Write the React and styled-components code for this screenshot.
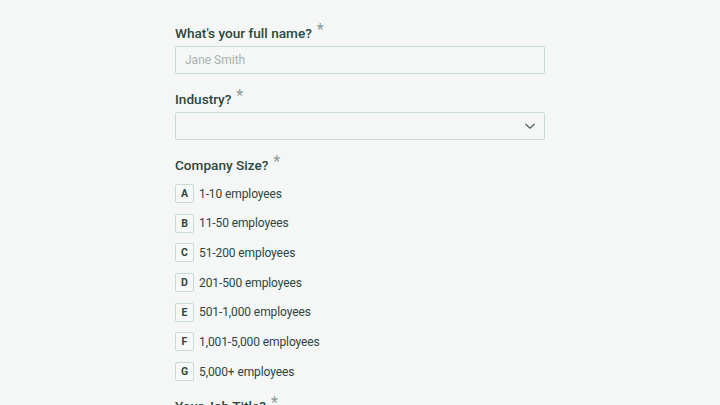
import React from "react";
import styled, { createGlobalStyle } from "styled-components";

const Global = createGlobalStyle`
  html, body {
    margin: 0;
    padding: 0;
    background: #f4f7f6;
  }
  body {
    font-family: Roboto, "Noto Sans", sans-serif;
    color: #2f4a44;
  }
`;

const Page = styled.div`
  display: flex;
  justify-content: center;
  padding-top: 23px;
  height: 382px;
  overflow: hidden;
`;

const Form = styled.form`
  width: 370px;
  display: flex;
  flex-direction: column;
`;

const Field = styled.div`
  display: flex;
  flex-direction: column;
  margin-bottom: 15px;
`;

const Label = styled.label`
  font-size: 13.6px;
  font-weight: 500;
  line-height: 20px;
  height: 20px;
  color: #2c4741;
  margin-bottom: 3px;
`;

const Star = styled.span`
  display: inline-block;
  font-size: 16px;
  font-weight: 400;
  color: #8d9d98;
  margin-left: 5px;
  line-height: 0;
  position: relative;
  top: -3px;
`;

const TextInput = styled.input`
  box-sizing: border-box;
  height: 28px;
  width: 100%;
  border: 1px solid #c8dcd5;
  border-radius: 2px;
  background: #f4f7f6;
  padding: 0 9px;
  font-family: inherit;
  font-size: 12px;
  color: #2f4a44;
  outline: none;
  &::placeholder {
    color: #a5b2ae;
  }
`;

const SelectBox = styled.div`
  box-sizing: border-box;
  height: 28px;
  width: 100%;
  border: 1px solid #c8dcd5;
  border-radius: 2px;
  background: #f4f7f6;
  display: flex;
  align-items: center;
  justify-content: flex-end;
  padding-right: 8px;
`;

const Options = styled.div`
  display: flex;
  flex-direction: column;
  gap: 10.7px;
  margin-top: 6px;
`;

const Option = styled.div`
  display: flex;
  align-items: center;
  height: 19px;
  gap: 5px;
`;

const Key = styled.span`
  box-sizing: border-box;
  width: 19px;
  height: 19px;
  border: 1px solid #c8dcd5;
  border-radius: 2px;
  background: #f7f9f8;
  display: flex;
  align-items: center;
  justify-content: center;
  font-size: 10.5px;
  font-weight: 700;
  color: #2c4741;
`;

const OptionText = styled.span`
  font-size: 12px;
  color: #2e4540;
  letter-spacing: -0.1px;
`;

const sizes = [
  ["A", "1-10 employees"],
  ["B", "11-50 employees"],
  ["C", "51-200 employees"],
  ["D", "201-500 employees"],
  ["E", "501-1,000 employees"],
  ["F", "1,001-5,000 employees"],
  ["G", "5,000+ employees"],
];

const Chevron = () => (
  <svg width="12" height="12" viewBox="0 0 12 12" fill="none">
    <path d="M1.8 4.2 L6 8.2 L10.2 4.2" stroke="#50645f" strokeWidth="1.2" strokeLinecap="round" strokeLinejoin="round" />
  </svg>
);

export default function App() {
  return (
    <Page>
      <Global />
      <Form>
        <Field>
          <Label>
            What's your full name?<Star>*</Star>
          </Label>
          <TextInput placeholder="Jane Smith" />
        </Field>
        <Field>
          <Label>
            Industry?<Star>*</Star>
          </Label>
          <SelectBox>
            <Chevron />
          </SelectBox>
        </Field>
        <Field>
          <Label>
            Company Size?<Star>*</Star>
          </Label>
          <Options>
            {sizes.map(([k, t]) => (
              <Option key={k}>
                <Key>{k}</Key>
                <OptionText>{t}</OptionText>
              </Option>
            ))}
          </Options>
        </Field>
        <Field>
          <Label>
            Your Job Title?<Star>*</Star>
          </Label>
        </Field>
      </Form>
    </Page>
  );
}
